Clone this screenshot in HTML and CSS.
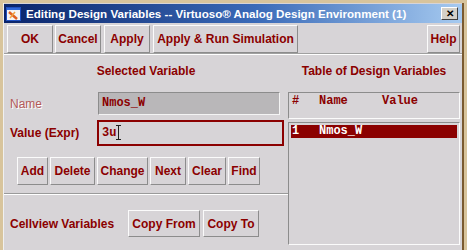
FILE: index.html
```html
<!DOCTYPE html>
<html lang="en">
<head>
    <meta charset="UTF-8">
    <title>Editing Design Variables</title>
    <link rel="stylesheet" href="styles.css">
</head>
<body>
    <div class="window">
        <header class="titlebar">
            <svg class="app-icon" width="15" height="14" viewBox="0 0 15 14">
                <rect x="0.5" y="0.5" width="14" height="13" fill="#f4f4f4" stroke="#2050c0"/>
                <rect x="1" y="1" width="13" height="2" fill="#3068d8"/>
                <path d="M3 5 L11 12" stroke="#e06020" stroke-width="2.5"/>
                <path d="M9 5 L4 11" stroke="#f0a040" stroke-width="1.5"/>
            </svg>
            <span class="title">Editing Design Variables -- Virtuoso® Analog Design Environment (1)</span>
            <span class="close">✕</span>
        </header>

        <nav class="toolbar">
            <button class="btn w-ok">OK</button>
            <button class="btn w-cancel">Cancel</button>
            <button class="btn w-apply">Apply</button>
            <button class="btn w-run">Apply &amp; Run Simulation</button>
            <span class="spacer"></span>
            <button class="btn w-help">Help</button>
        </nav>

        <main class="content">
            <section class="left">
                <h2>Selected Variable</h2>
                <div class="row">
                    <label class="disabled">Name</label>
                    <div class="field readonly">Nmos_W</div>
                </div>
                <div class="row">
                    <label>Value (Expr)</label>
                    <div class="field active">3u<span class="ibeam"></span></div>
                </div>
                <div class="actions">
                    <button class="btn w-add">Add</button>
                    <button class="btn w-delete">Delete</button>
                    <button class="btn w-change">Change</button>
                    <button class="btn w-next">Next</button>
                    <button class="btn w-clear">Clear</button>
                    <button class="btn w-find">Find</button>
                </div>
                <div class="cellview">
                    <label>Cellview Variables</label>
                    <button class="btn w-from">Copy From</button>
                    <button class="btn w-to">Copy To</button>
                </div>
            </section>

            <section class="right">
                <h2>Table of Design Variables</h2>
                <div class="table-head">
                    <span class="col-num">#</span>
                    <span class="col-name">Name</span>
                    <span class="col-value">Value</span>
                </div>
                <div class="table-body">
                    <div class="table-row selected">
                        <span class="col-num">1</span>
                        <span class="col-name">Nmos_W</span>
                    </div>
                </div>
            </section>
        </main>
    </div>
</body>
</html>
```

FILE: styles.css
```css
* {
    margin: 0;
    padding: 0;
    box-sizing: border-box;
}

body {
    background-color: #d8c49c;
    font-family: "Liberation Sans", Arial, sans-serif;
    width: 467px;
    height: 250px;
    overflow: hidden;
}

.window {
    margin: 3px 0 0 3px;
    width: 461px;
    height: 247px;
    background-color: #d7d4d7;
    border-left: 1px solid #f0f0f0;
    border-right: 2px solid #7a5a30;
    display: flex;
    flex-direction: column;
}

/* title bar */
.titlebar {
    height: 19px;
    margin-top: 1px;
    display: flex;
    align-items: center;
    background: linear-gradient(to right, #0a246a, #3a6ab8 55%, #a6caf0);
    color: #fff;
    padding-left: 2px;
}

.app-icon {
    flex: none;
    margin-right: 5px;
}

.title {
    font-weight: bold;
    font-size: 11.6px;
    white-space: nowrap;
    flex-grow: 1;
}

.close {
    width: 17px;
    height: 13px;
    margin-right: 4px;
    background-color: #d4d0c8;
    border: 1px solid;
    border-color: #fff #404040 #404040 #fff;
    color: #000;
    font-size: 10px;
    font-weight: bold;
    line-height: 11px;
    text-align: center;
}

/* buttons */
.btn {
    height: 28px;
    background-color: #d7d4d7;
    border: 1px solid;
    border-color: #fbfbfb #8c8c8c #8c8c8c #fbfbfb;
    color: #8b0000;
    font-family: "Liberation Sans", Arial, sans-serif;
    font-weight: bold;
    font-size: 12px;
    text-align: center;
}

.toolbar {
    display: flex;
    gap: 2px;
    padding: 2px 0 0 3px;
    height: 31px;
    border-bottom: 1px solid #a0a0a0;
}

.spacer {
    flex-grow: 1;
}

.w-ok { width: 46px; }
.w-cancel { width: 46px; }
.w-apply { width: 46px; margin-left: 1px; }
.w-run { width: 145px; margin-left: 1px; }
.w-help { width: 33px; margin-right: 2px; }

/* content */
.content {
    display: flex;
    flex-grow: 1;
    border-top: 1px solid #fff;
}

.left {
    width: 284px;
}

.right {
    width: 172px;
}

h2 {
    font-size: 12px;
    font-weight: bold;
    color: #8b0000;
    text-align: center;
    line-height: 14px;
    margin-top: 9px;
}

.row {
    display: flex;
    align-items: center;
    margin-top: 14px;
}

.row + .row {
    margin-top: 5px;
}

.row label {
    width: 93px;
    padding-left: 6px;
    font-size: 12px;
    font-weight: bold;
    color: #8b0000;
}

.row label.disabled {
    font-weight: normal;
    color: #b45a5a;
    text-shadow: 1px 1px 0 #fff;
}

.field {
    font-family: "Liberation Mono", "Courier New", monospace;
    font-weight: bold;
    font-size: 12px;
    color: #8b0000;
}

.field.readonly {
    margin-left: 1px;
    width: 182px;
    height: 23px;
    line-height: 21px;
    padding-left: 3px;
    background-color: #b9b7b9;
    border: 1px solid;
    border-color: #8c8c8c #f4f4f4 #f4f4f4 #8c8c8c;
}

.field.active {
    position: relative;
    width: 187px;
    height: 26px;
    line-height: 22px;
    padding-left: 3px;
    border: 2px solid #8b0000;
}

.ibeam {
    position: absolute;
    left: 17px;
    top: 3px;
    width: 5px;
    height: 15px;
    border-top: 1px solid #202020;
    border-bottom: 1px solid #202020;
}

.ibeam::after {
    content: "";
    position: absolute;
    left: 2px;
    top: 0;
    width: 1px;
    height: 13px;
    background-color: #202020;
}

.actions {
    display: flex;
    gap: 2px;
    padding-left: 13px;
    margin-top: 11px;
    padding-bottom: 8px;
    border-bottom: 1px solid #9a9a9a;
}

.w-add { width: 31px; }
.w-delete { width: 45px; }
.w-change { width: 51px; }
.w-next { width: 36px; }
.w-clear { width: 38px; }
.w-find { width: 32px; }

.cellview {
    display: flex;
    align-items: center;
    gap: 3px;
    padding-left: 6px;
    padding-top: 15px;
    border-top: 1px solid #fff;
}

.cellview label {
    width: 115px;
    font-size: 12px;
    font-weight: bold;
    color: #8b0000;
}

.cellview .btn {
    height: 27px;
}

.w-from { width: 72px; }
.w-to { width: 56px; }

/* table */
.table-head,
.table-body {
    border: 1px solid;
    border-color: #8c8c8c #fbfbfb #fbfbfb #8c8c8c;
    font-family: "Liberation Mono", "Courier New", monospace;
    font-weight: bold;
    font-size: 12px;
}

.table-head {
    margin-top: 14px;
    height: 27px;
    padding: 1px 0 0 3px;
    color: #8b0000;
    display: flex;
}

.table-body {
    margin-top: 3px;
    height: 123px;
    padding: 2px;
}

.table-row {
    display: flex;
    height: 13px;
    line-height: 13px;
    padding-left: 1px;
}

.table-row.selected {
    background-color: #8b0000;
    color: #fff;
}

.col-num { width: 27px; }
.col-name { width: 63px; }
```
